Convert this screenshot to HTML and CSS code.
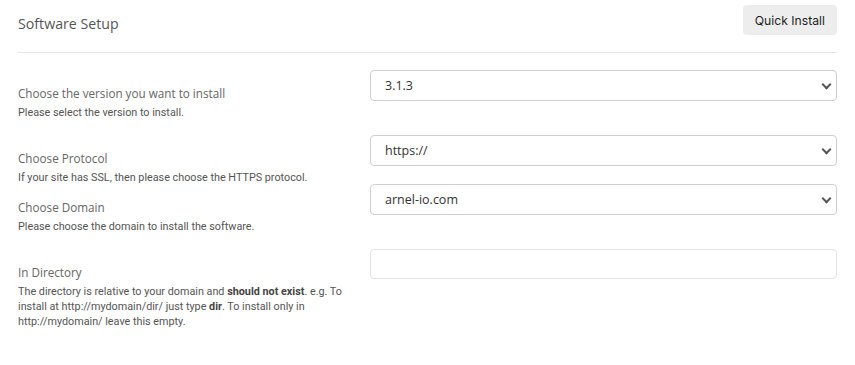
FILE: index.html
```html
<!DOCTYPE html>
<html lang="en">
<head>
    <meta charset="UTF-8">
    <meta name="viewport" content="width=device-width, initial-scale=1.0">
    <title>Software Setup</title>
    <link rel="stylesheet" href="styles.css">
</head>
<body>

    <!-- Section Setup -->
    <section class="setup">
        <div class="setup-header">
            <h2>Software Setup</h2>
            <button type="button" class="quick-btn">Quick Install</button>
        </div>

        <form action="install.php" method="post">
            <!-- Version -->
            <div class="row">
                <div class="info">
                    <label for="version">Choose the version you want to install</label>
                    <p class="help">Please select the version to install.</p>
                </div>
                <div class="field">
                    <div class="select-wrap">
                        <select id="version" name="version">
                            <option>3.1.3</option>
                        </select>
                    </div>
                </div>
            </div>

            <!-- Protocol -->
            <div class="row">
                <div class="info">
                    <label for="protocol">Choose Protocol</label>
                    <p class="help">If your site has SSL, then please choose the HTTPS protocol.</p>
                </div>
                <div class="field">
                    <div class="select-wrap">
                        <select id="protocol" name="protocol">
                            <option>https://</option>
                            <option>http://</option>
                        </select>
                    </div>
                </div>
            </div>

            <!-- Domain -->
            <div class="row row-joined">
                <div class="info">
                    <label for="domain">Choose Domain</label>
                    <p class="help">Please choose the domain to install the software.</p>
                </div>
                <div class="field">
                    <div class="select-wrap">
                        <select id="domain" name="domain">
                            <option>arnel-io.com</option>
                        </select>
                    </div>
                </div>
            </div>

            <!-- Directory -->
            <div class="row">
                <div class="info">
                    <label for="directory">In Directory</label>
                    <p class="help">The directory is relative to your domain and <strong>should not exist</strong>. e.g. To install at http://mydomain/dir/ just type <strong>dir</strong>. To install only in http://mydomain/ leave this empty.</p>
                </div>
                <div class="field">
                    <input type="text" id="directory" name="directory">
                </div>
            </div>
        </form>
    </section>
    <!-- Section Setup End -->

</body>
</html>
```

FILE: styles.css
```css
/* Reset some default browser styles */
body, h2, p {
    margin: 0;
    padding: 0;
}

body {
    font-family: "Open Sans", "Noto Sans", sans-serif;
    background-color: #fff;
    color: #333;
}

/* Setup wrapper */
.setup {
    padding: 0 18px;
}

/* Header with title and button */
.setup-header {
    display: flex;
    justify-content: space-between;
    align-items: flex-start;
    box-sizing: border-box;
    height: 53px;
    padding-top: 5px;
    border-bottom: 1px solid #e6e6e6;
}

.setup-header h2 {
    margin-top: 9px;
    font-size: 14.2px;
    line-height: 20px;
    font-weight: normal;
    color: #555;
}

.quick-btn {
    height: 30px;
    padding: 0 12px;
    border: none;
    border-radius: 4px;
    background-color: #ededed;
    color: #1d1d1d;
    font-family: Inter, "Liberation Sans", sans-serif;
    font-size: 12.2px;
    cursor: pointer;
}

.quick-btn:hover {
    background-color: #e2e2e2;
}

/* Form rows */
form {
    padding-top: 17px;
}

.row {
    display: flex;
    align-items: flex-start;
    gap: 20px;
}

.row + .row {
    margin-top: 15px;
}

.row.row-joined {
    margin-top: -1px;
}

.info {
    width: 332px;
    flex-shrink: 0;
    padding-top: 15px;
}

.info label {
    display: block;
    font-size: 11.7px;
    line-height: 17px;
    color: #666;
}

.help {
    margin-top: 3px;
    font-family: Roboto, "Liberation Sans", sans-serif;
    font-size: 10.8px;
    line-height: 15px;
    color: #555;
}

.help strong {
    font-weight: bold;
    color: #444;
}

.field {
    flex: 1;
}

/* Selects with custom chevron */
.select-wrap {
    position: relative;
}

.select-wrap::after {
    content: "";
    position: absolute;
    right: 7px;
    top: 11px;
    width: 5px;
    height: 5px;
    border-right: 2px solid #555;
    border-bottom: 2px solid #555;
    transform: rotate(45deg);
    pointer-events: none;
}

.field select,
.field input[type="text"] {
    display: block;
    width: 100%;
    box-sizing: border-box;
    margin: 0;
    padding: 0 14px;
    border: 1px solid #cfcfcf;
    border-radius: 4px;
    background-color: #fff;
    font-family: "Open Sans", "Noto Sans", sans-serif;
    font-size: 12.5px;
    color: #333;
    outline: none;
}

.field select {
    height: 31px;
    appearance: none;
    -webkit-appearance: none;
}

.field input[type="text"] {
    height: 30px;
    border-color: #e3e3e3;
}
```
